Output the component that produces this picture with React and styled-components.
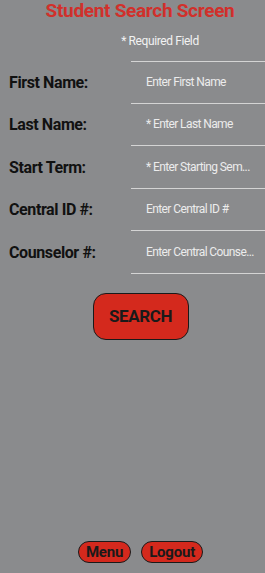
import React from "react";
import styled, { createGlobalStyle } from "styled-components";

const GlobalStyle = createGlobalStyle`
  html, body {
    margin: 0;
    padding: 0;
    background: #8a8b8d;
  }
  * {
    box-sizing: border-box;
  }
`;

const fields = [
  { label: "First Name:", placeholder: "Enter First Name" },
  { label: "Last Name:", placeholder: "* Enter Last Name" },
  { label: "Start Term:", placeholder: "* Enter Starting Sem..." },
  { label: "Central ID #:", placeholder: "Enter Central ID #" },
  { label: "Counselor #:", placeholder: "Enter Central Counse..." },
];

function App() {
  return (
    <Screen>
      <GlobalStyle />
      <Title>Student Search Screen</Title>
      <Required>* Required Field</Required>
      <Form>
        {fields.map((f, i) => (
          <Row key={f.label}>
            <Label>{f.label}</Label>
            <Field first={i === 0}>
              <Placeholder>{f.placeholder}</Placeholder>
            </Field>
          </Row>
        ))}
      </Form>
      <SearchBtn>SEARCH</SearchBtn>
      <Spacer />
      <Footer>
        <PillBtn>Menu</PillBtn>
        <PillBtn>Logout</PillBtn>
      </Footer>
    </Screen>
  );
}

export default App;

const Screen = styled.div`
  height: 573px;
  display: flex;
  flex-direction: column;
  align-items: center;
  background: #8a8b8d;
  font-family: Roboto, "Liberation Sans", Arial, sans-serif;
  overflow: hidden;
`;

const Title = styled.h1`
  margin: 0 0 0 15px;
  padding-top: 0;
  font-family: Roboto, "Liberation Sans", Arial, sans-serif;
  font-size: 19px;
  font-weight: bold;
  color: #d1302b;
  line-height: 21px;
  letter-spacing: -0.3px;
`;

const Required = styled.div`
  margin-top: 13px;
  margin-left: 55px;
  font-size: 12px;
  color: #f2f2f2;
  line-height: 15px;
  letter-spacing: -0.4px;
`;

const Form = styled.div`
  width: 100%;
  margin-top: 12px;
  display: flex;
  flex-direction: column;
`;

const Row = styled.div`
  display: flex;
  height: 42.5px;
  align-items: stretch;
`;

const Label = styled.div`
  width: 131px;
  padding-left: 9px;
  display: flex;
  align-items: center;
  font-size: 16px;
  font-weight: bold;
  color: #111;
  letter-spacing: -0.4px;
`;

const Field = styled.div`
  flex: 1;
  display: flex;
  align-items: center;
  padding-left: 15px;
  border-bottom: 1px solid #d4d4d4;
  border-top: ${(p) => (p.first ? "1px solid #d4d4d4" : "none")};
`;

const Placeholder = styled.span`
  font-size: 12px;
  color: #ececec;
  white-space: nowrap;
  letter-spacing: -0.6px;
`;

const SearchBtn = styled.button`
  margin-top: 19px;
  margin-left: 16px;
  width: 96px;
  height: 47px;
  border-radius: 13px;
  border: 1.5px solid #1a1a1a;
  background: #d4291d;
  color: #1a1a1a;
  font-family: Roboto, "Liberation Sans", Arial, sans-serif;
  font-weight: bold;
  font-size: 17px;
  letter-spacing: -0.4px;
  cursor: pointer;
`;

const Spacer = styled.div`
  flex: 1;
`;

const Footer = styled.div`
  display: flex;
  gap: 10px;
  margin-bottom: 10px;
  margin-left: 16px;
`;

const PillBtn = styled.button`
  height: 22px;
  padding: 0 7px;
  border-radius: 11px;
  border: 1.5px solid #1a1a1a;
  background: #d4291d;
  color: #1a1a1a;
  font-family: Roboto, "Liberation Sans", Arial, sans-serif;
  font-weight: bold;
  font-size: 15px;
  line-height: 18px;
  letter-spacing: -0.2px;
  cursor: pointer;
`;
